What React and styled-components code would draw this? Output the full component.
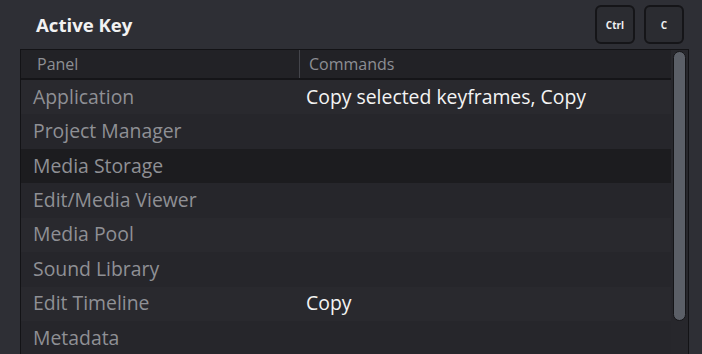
import styled, { createGlobalStyle } from "styled-components";

const GlobalStyle = createGlobalStyle`
    html, body {
        margin: 0;
        padding: 0;
        background: #2e2f35;
        overflow: hidden;
    }
    body {
        font-family: "Open Sans", "Noto Sans", sans-serif;
    }
`;

const Page = styled.div`
    width: 702px;
    height: 354px;
    background: #2e2f35;
    display: flex;
    flex-direction: column;
    overflow: hidden;
`;

const TopBar = styled.div`
    height: 49px;
    display: flex;
    align-items: center;
    justify-content: space-between;
    padding: 0 18px 0 36px;
    flex-shrink: 0;
`;

const Title = styled.h1`
    margin: 0;
    color: #f2f2f2;
    font-size: 18.6px;
    font-weight: 700;
`;

const Keys = styled.div`
    display: flex;
    gap: 9px;
`;

const Key = styled.div`
    width: 36px;
    height: 35px;
    border: 2px solid #151518;
    border-radius: 6px;
    background: #2b2c31;
    color: #f0f0f0;
    font-size: 10px;
    font-weight: 700;
    display: flex;
    align-items: center;
    justify-content: center;
`;

const Table = styled.div`
    margin-left: 20px;
    width: 667px;
    flex: 1;
    border: 1px solid #131316;
    border-bottom: 0;
    background: #27272c;
    display: flex;
    min-height: 0;
`;

const Body = styled.div`
    flex: 1;
    display: flex;
    flex-direction: column;
`;

const HeaderRow = styled.div`
    height: 28px;
    display: grid;
    grid-template-columns: 279px 1fr;
    background: #222226;
    border-bottom: 2px solid #151518;
    flex-shrink: 0;
`;

const HeaderCell = styled.div`
    display: flex;
    align-items: center;
    padding-left: ${(p) => p.$pad}px;
    color: #8d8f94;
    font-size: 16px;
    border-right: ${(p) => (p.$divider ? "1px solid #44454b" : "0")};
`;

const Row = styled.div`
    height: 34.45px;
    flex-shrink: 0;
    display: grid;
    grid-template-columns: 279px 1fr;
    align-items: center;
    background: ${(p) => (p.$selected ? "#1c1c1f" : p.$odd ? "#29292e" : "#26262b")};
`;

const PanelName = styled.div`
    padding-left: 12px;
    color: #8f9095;
    font-size: 19.4px;
    line-height: 24px;
    margin-top: -1px;
    white-space: nowrap;
`;

const Command = styled.div`
    padding-left: 6px;
    color: #f4f4f4;
    font-size: 19.4px;
    line-height: 24px;
    margin-top: -1px;
    white-space: nowrap;
`;

const Track = styled.div`
    width: 17px;
    display: flex;
    justify-content: center;
    padding-top: 1px;
`;

const Thumb = styled.div`
    width: 11px;
    height: 268px;
    border: 1px solid #151518;
    border-radius: 7px;
    background: #5b5f67;
`;

const rows = [
    { panel: "Application", command: "Copy selected keyframes, Copy" },
    { panel: "Project Manager" },
    { panel: "Media Storage", selected: true },
    { panel: "Edit/Media Viewer" },
    { panel: "Media Pool" },
    { panel: "Sound Library" },
    { panel: "Edit Timeline", command: "Copy" },
    { panel: "Metadata" },
];

export default function App() {
    return (
        <>
            <GlobalStyle />
            <Page>
                <TopBar>
                    <Title>Active Key</Title>
                    <Keys>
                        <Key>Ctrl</Key>
                        <Key>C</Key>
                    </Keys>
                </TopBar>
                <Table>
                    <Body>
                        <HeaderRow>
                            <HeaderCell $pad={16} $divider>Panel</HeaderCell>
                            <HeaderCell $pad={9}>Commands</HeaderCell>
                        </HeaderRow>
                        {rows.map((r, i) => (
                            <Row key={r.panel} $odd={i % 2 === 0} $selected={r.selected}>
                                <PanelName>{r.panel}</PanelName>
                                <Command>{r.command}</Command>
                            </Row>
                        ))}
                    </Body>
                    <Track>
                        <Thumb />
                    </Track>
                </Table>
            </Page>
        </>
    );
}
